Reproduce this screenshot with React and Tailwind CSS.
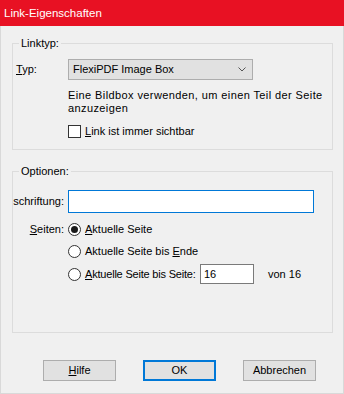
import React from 'react';

const FONT = { fontFamily: '"Liberation Sans", Arial, sans-serif' };

function Radio({ checked }) {
  return (
    <span className="w-[13px] h-[13px] rounded-full border border-[#333] bg-white flex items-center justify-center shrink-0">
      {checked && <span className="w-[7px] h-[7px] rounded-full bg-[#1a1a1a]" />}
    </span>
  );
}

function Btn({ children, primary }) {
  return (
    <button
      className={
        'w-[73px] h-[21px] bg-[#E1E1E1] text-[11px] text-black flex items-center justify-center ' +
        (primary ? 'border-2 border-[#0078D7]' : 'border border-[#ADADAD]')
      }
    >
      {children}
    </button>
  );
}

export default function App() {
  return (
    <div className="w-[344px] h-[394px] bg-[#F0F0F0] text-black text-[11px] leading-[13px] border-r border-b border-l border-[#d9d9d9] flex flex-col" style={FONT}>
      {/* title bar */}
      <div className="h-[26px] bg-[#E81123] text-white text-[11.5px] flex items-center pl-[4px] shrink-0 -mx-px">
        Link-Eigenschaften
      </div>

      {/* Linktyp */}
      <fieldset className="ml-[11px] mr-[10px] mt-[11px] border border-[#DCDCDC] h-[113px]">
        <legend className="ml-[6px] px-[2px]">Linktyp:</legend>
        <div className="flex items-center mt-[9px]">
          <span className="w-[55px] pl-[3px]"><u>T</u>yp:</span>
          <div className="w-[185px] h-[21px] bg-[#E1E1E1] border border-[#ADADAD] flex items-center pl-[4px] pr-[6px]">
            <span className="flex-1">FlexiPDF Image Box</span>
            <svg width="8" height="5" viewBox="0 0 8 5">
              <polyline points="0.5,0.5 4,4 7.5,0.5" fill="none" stroke="#555" strokeWidth="1" />
            </svg>
          </div>
        </div>
        <div className="ml-[55px] mt-[9px] tracking-[0.4px] whitespace-nowrap">
          Eine Bildbox verwenden, um einen Teil der Seite<br />anzuzeigen
        </div>
        <div className="ml-[55px] mt-[10px] flex items-center gap-[4px]">
          <span className="w-[13px] h-[13px] border border-[#333] bg-white shrink-0" />
          <span><u>L</u>ink ist immer sichtbar</span>
        </div>
      </fieldset>

      {/* Optionen */}
      <fieldset className="ml-[11px] mr-[10px] mt-[15px] border border-[#DCDCDC] h-[168px]">
        <legend className="ml-[6px] px-[2px]">Optionen:</legend>
        <div className="flex items-center mt-[12px]">
          <span className="w-[51px] overflow-hidden whitespace-nowrap flex justify-end">schriftung:</span>
          <div className="ml-[4px] w-[246px] h-[23px] bg-white border border-[#0078D7]" />
        </div>
        <div className="flex mt-[5px]">
          <span className="w-[51px] text-right pt-[5px]"><u>S</u>eiten:</span>
          <div className="ml-[4px] flex flex-col">
            <div className="h-[22px] flex items-center gap-[4px]">
              <Radio checked />
              <span><u>A</u>ktuelle Seite</span>
            </div>
            <div className="h-[23px] flex items-center gap-[4px]">
              <Radio />
              <span>Aktuelle Seite bis <u>E</u>nde</span>
            </div>
            <div className="h-[22px] flex items-center gap-[4px]">
              <Radio />
              <span className="w-[111px] whitespace-nowrap tracking-[-0.2px]"><u>A</u>ktuelle Seite bis Seite:</span>
              <div className="w-[54px] h-[20px] bg-white border border-[#7A7A7A] flex items-center pl-[3px]">16</div>
              <span className="ml-[10px]">von 16</span>
            </div>
          </div>
        </div>
      </fieldset>

      {/* buttons */}
      <div className="flex gap-[27px] pl-[42px] mt-[27px]">
        <Btn><span><u>H</u>ilfe</span></Btn>
        <Btn primary>OK</Btn>
        <Btn>Abbrechen</Btn>
      </div>
    </div>
  );
}
